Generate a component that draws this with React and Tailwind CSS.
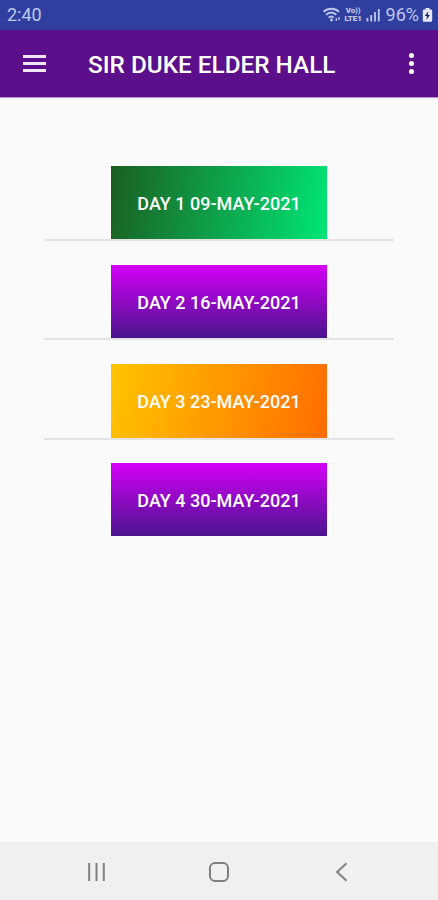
import React from 'react'

const days = [
  { label: 'DAY 1 09-MAY-2021', fill: 'h-[73px] pt-[2px] bg-linear-[100deg,#1b5e20,#00e676]', divider: 'mb-6' },
  { label: 'DAY 2 16-MAY-2021', fill: 'h-[73px] pt-[2px] bg-linear-[180deg,#d500f9,#4a148c]', divider: 'mb-6' },
  { label: 'DAY 3 23-MAY-2021', fill: 'h-[74px] pt-[1px] bg-linear-[100deg,#ffc400,#ff6d00]', divider: 'mb-[23px]' },
  { label: 'DAY 4 30-MAY-2021', fill: 'h-[73px] pt-[2px] bg-linear-[180deg,#d500f9,#4a148c]' },
]

function WifiIcon() {
  return (
    <svg width="18" height="16" viewBox="0 0 18 16" fill="none" stroke="#bfc8ee" strokeWidth="1.9">
      <path d="M.6 4.8C5 .8 11.600 .8 16 4.800" />
      <path d="M3.1 7.800C6.200 5 10.200 5 13.300 7.800" />
      <path d="M5.600 10.600C7.200 9.100 9.200 9.100 10.800 10.600" />
      <circle cx="8.500" cy="13" r="1.4" fill="#bfc8ee" stroke="none" />
      <path d="M13.3 11v3M16 10v3" strokeWidth="1.3" />
    </svg>
  )
}

function SignalIcon() {
  return (
    <svg width="15" height="14" viewBox="0 0 15 14" fill="#bfc8ee">
      <rect x="0.5" y="10" width="1.8" height="3.5" />
      <rect x="4.3" y="7" width="1.8" height="6.5" />
      <rect x="8.1" y="4" width="1.8" height="9.5" />
      <rect x="11.9" y="1" width="1.8" height="12.5" />
    </svg>
  )
}

function BatteryIcon() {
  return (
    <svg width="11" height="14" viewBox="0 0 11 14">
      <path d="M3.5 0h4v1.5H9a1.2 1.2 0 0 1 1.2 1.2v9.8A1.2 1.2 0 0 1 9 13.7H2a1.2 1.2 0 0 1-1.2-1.2V2.7A1.2 1.2 0 0 1 2 1.5h1.5z" fill="#e4e8fa" />
      <path d="M6.3 3.3L2.8 8h2.2l-.6 3.7L8 7H5.8z" fill="#20265a" />
    </svg>
  )
}

function StatusBar() {
  return (
    <div className="flex h-[30px] items-center bg-[#303f9f] pr-[5px] pl-[7px] text-[#bfc8ee]">
      <span className="text-[18px] leading-none">2:40</span>
      <div className="ml-auto flex items-center">
        <WifiIcon />
        <div className="ml-[3px] flex w-[19px] flex-col items-center text-[8px] leading-[8px] font-black tracking-[-0.1px]">
          <span>Vo))</span>
          <span>LTE1</span>
        </div>
        <div className="ml-[3px]">
          <SignalIcon />
        </div>
        <span className="ml-[5px] text-[18px] leading-none">96%</span>
        <div className="ml-[3px]">
          <BatteryIcon />
        </div>
      </div>
    </div>
  )
}

function AppBar() {
  return (
    <header className="flex h-[67px] items-center bg-[#5b0f8b] pr-6 pl-[23px] text-white shadow-[0_1px_1px_rgba(91,15,139,0.4)]">
      <button type="button" aria-label="Menu" className="flex w-[23px] flex-col gap-1">
        <span className="h-[3px] bg-[#f0e6f6]" />
        <span className="h-[3px] bg-[#f0e6f6]" />
        <span className="h-[3px] bg-[#f0e6f6]" />
      </button>
      <h1 className="ml-[42px] pt-[3px] text-[24.3px] leading-none font-medium whitespace-nowrap">SIR DUKE ELDER HALL</h1>
      <button type="button" aria-label="More" className="ml-auto flex flex-col gap-[3px]">
        <span className="size-[5px] rounded-full bg-white" />
        <span className="size-[5px] rounded-full bg-white" />
        <span className="size-[5px] rounded-full bg-white" />
      </button>
    </header>
  )
}

function NavBar() {
  return (
    <nav className="grid h-[58px] grid-cols-[123px_1fr_123px] items-center bg-[#f0f0f0] pt-0.5">
      <svg className="ml-[87px]" width="20" height="20" viewBox="0 0 20 20" stroke="#808080" strokeWidth="2">
        <path d="M2.2 1v18M9.5 1v18M16.8 1v18" />
      </svg>
      <svg className="mx-auto" width="22" height="22" viewBox="0 0 22 22" fill="none" stroke="#808080" strokeWidth="2">
        <rect x="2" y="2" width="18" height="18" rx="5" />
      </svg>
      <svg className="ml-5" width="13" height="20" viewBox="0 0 13 20" fill="none" stroke="#808080" strokeWidth="2">
        <path d="M11.5 1.2L2.2 10l9.3 8.8" />
      </svg>
    </nav>
  )
}

function App() {
  return (
    <div className="flex h-[900px] w-[438px] flex-col overflow-hidden bg-[#fafafa] font-[Roboto,sans-serif]">
      <StatusBar />
      <AppBar />
      <main className="flex flex-1 flex-col items-center pt-[69px]">
        {days.map((day) => (
          <React.Fragment key={day.label}>
            <button
              type="button"
              className={`w-[216px] shrink-0 text-[18px] font-medium whitespace-nowrap text-white ${day.fill}`}
            >
              {day.label}
            </button>
            {day.divider && <div className={`h-0.5 w-[350px] shrink-0 bg-[#e4e4e4] ${day.divider}`} />}
          </React.Fragment>
        ))}
      </main>
      <NavBar />
    </div>
  )
}

export default App
